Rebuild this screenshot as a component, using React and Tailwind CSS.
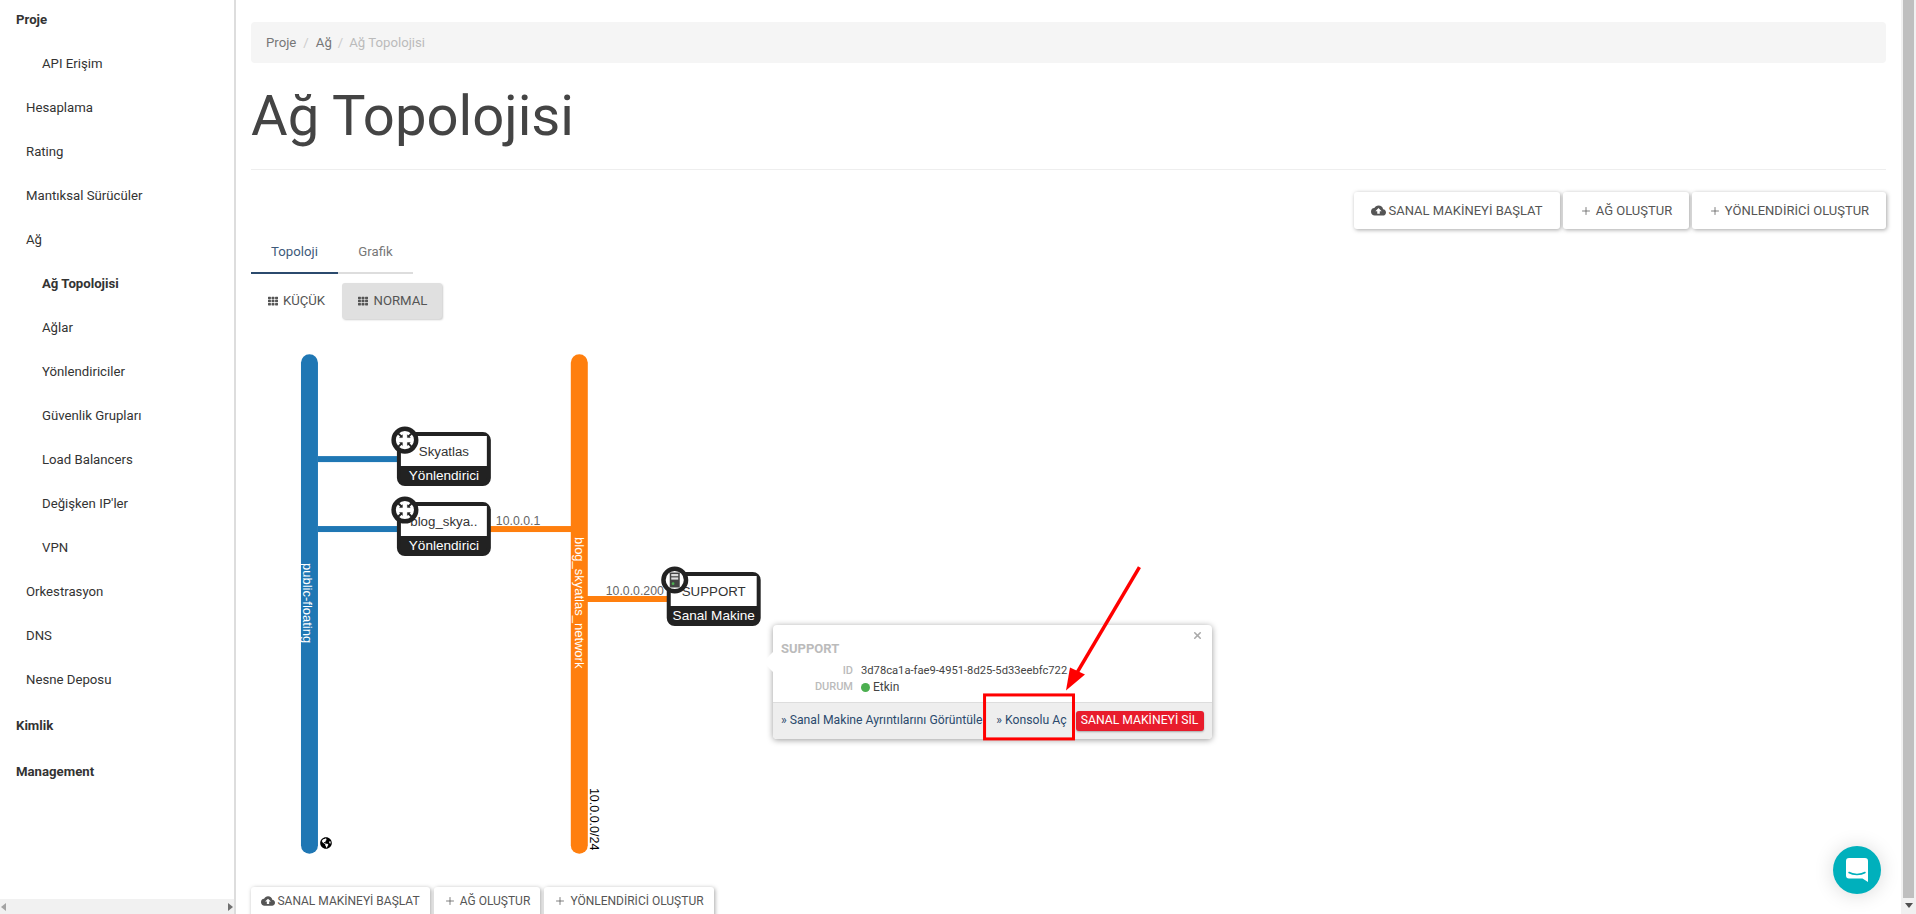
import { FaTh, FaGlobeAmericas } from "react-icons/fa";
import { MdCloudUpload } from "react-icons/md";
import { Plus, X } from "lucide-react";

const navItems = [
  { label: "Proje", level: 0 },
  { label: "API Erişim", level: 2 },
  { label: "Hesaplama", level: 1 },
  { label: "Rating", level: 1 },
  { label: "Mantıksal Sürücüler", level: 1 },
  { label: "Ağ", level: 1 },
  { label: "Ağ Topolojisi", level: 2, active: true },
  { label: "Ağlar", level: 2 },
  { label: "Yönlendiriciler", level: 2 },
  { label: "Güvenlik Grupları", level: 2 },
  { label: "Load Balancers", level: 2 },
  { label: "Değişken IP'ler", level: 2 },
  { label: "VPN", level: 2 },
  { label: "Orkestrasyon", level: 1 },
  { label: "DNS", level: 1 },
  { label: "Nesne Deposu", level: 1 },
  { label: "Kimlik", level: 0, gap: true },
  { label: "Management", level: 0, gap: true },
];

function NavItem({ item }) {
  let cls = "h-[44px] shrink-0 flex items-center text-[13.2px] text-[#333] whitespace-nowrap ";
  if (item.level === 0) cls += "pl-[16px] font-bold ";
  if (item.level === 1) cls += "pl-[26px] ";
  if (item.level === 2) cls += "pl-[42px] ";
  if (item.active) cls += "font-bold ";
  if (item.gap) cls += "mt-[2px] ";
  return <div className={cls}>{item.label}</div>;
}

function Sidebar() {
  return (
    <aside className="w-[236px] shrink-0 h-full flex flex-col border-r-2 border-[#ddd]">
      <nav className="flex-1 flex flex-col overflow-hidden -mt-[2px]">
        {navItems.map((item) => (
          <NavItem key={item.label} item={item} />
        ))}
      </nav>
      <div className="h-[15px] shrink-0 bg-[#f1f1f1] flex items-center justify-between px-[1px]">
        <svg width="6" height="8" viewBox="0 0 6 8"><path d="M5 0v8L0 4z" fill="#a3a3a3" /></svg>
        <svg width="6" height="8" viewBox="0 0 6 8"><path d="M1 0v8l5-4z" fill="#707070" /></svg>
      </div>
    </aside>
  );
}

function ActionButton({ icon, label, className }) {
  return (
    <button className={"rounded-[3px] bg-white flex items-center justify-center text-[#555] whitespace-nowrap shadow-[1px_1px_4px_rgba(0,0,0,0.35)] " + className}>
      {icon}
      {label}
    </button>
  );
}

function TopActions() {
  const plus = <Plus size={12} strokeWidth={1.5} className="text-[#555]" />;
  return (
    <div className="flex gap-[3px] mt-[22px] justify-end shrink-0">
      <ActionButton icon={<MdCloudUpload size={15} />} label="SANAL MAKİNEYİ BAŞLAT" className="w-[206px] h-[37px] gap-[2px] text-[13px]" />
      <ActionButton icon={plus} label="AĞ OLUŞTUR" className="w-[126px] h-[37px] gap-[4px] text-[13px]" />
      <ActionButton icon={plus} label="YÖNLENDİRİCİ OLUŞTUR" className="w-[194px] h-[37px] gap-[4px] text-[13px]" />
    </div>
  );
}

function BottomActions() {
  const plus = <Plus size={12} strokeWidth={1.5} className="text-[#555]" />;
  return (
    <div className="flex gap-[4px] justify-start shrink-0">
      <ActionButton icon={<MdCloudUpload size={14} />} label="SANAL MAKİNEYİ BAŞLAT" className="w-[179px] h-[37px] pb-[10px] gap-[2px] text-[12px]" />
      <ActionButton icon={plus} label="AĞ OLUŞTUR" className="w-[106px] h-[37px] pb-[10px] gap-[4px] text-[12px]" />
      <ActionButton icon={plus} label="YÖNLENDİRİCİ OLUŞTUR" className="w-[170px] h-[37px] pb-[10px] gap-[4px] text-[12px]" />
    </div>
  );
}

function RouterIcon({ cx, cy }) {
  return (
    <g transform={`translate(${cx} ${cy})`}>
      <circle r="11.3" fill="#fff" stroke="#222" strokeWidth="4.5" />
      {[0, 90, 180, 270].map((r) => (
        <g key={r} transform={`rotate(${r})`} fill="#222" stroke="#222">
          <path d="M-7 -7L-3.5 -3.5" strokeWidth="2" />
          <path d="M-2.5 -2.5L-2.5 -5.4L-5.4 -2.5Z" strokeWidth="0.4" />
        </g>
      ))}
    </g>
  );
}

function ServerIcon({ cx, cy }) {
  return (
    <g transform={`translate(${cx} ${cy})`}>
      <circle r="11.3" fill="#fff" stroke="#222" strokeWidth="4.5" />
      <rect x="-5" y="-7.5" width="10" height="15" rx="0.8" fill="#444" />
      <rect x="-3.5" y="-6" width="7" height="2.2" fill="#ddd" />
      <rect x="-3.5" y="-2.6" width="7" height="2.2" fill="#ddd" />
      <circle cx="-1.7" cy="3.7" r="1.4" fill="#4caf50" />
    </g>
  );
}

function Node({ x, y, name, type, icon }) {
  return (
    <g>
      <rect x={x + 2} y={y + 2} width="90" height="50" rx="6" fill="#222" stroke="#222" strokeWidth="4" />
      <path d={`M${x + 4} ${y + 4}H${x + 90}V${y + 34}H${x + 4}Z`} fill="#fff" />
      <text x={x + 47} y={y + 24} textAnchor="middle" fontSize="13.3" fill="#333">{name}</text>
      <text x={x + 47} y={y + 48} textAnchor="middle" fontSize="13.6" fill="#fff">{type}</text>
      {icon}
    </g>
  );
}

function Topology() {
  return (
    <svg viewBox="251 319 1636 568" className="absolute inset-0 w-full h-full" style={{ fontFamily: "'Liberation Sans', Arial, sans-serif" }}>
      <rect x="318" y="456" width="80" height="6" fill="#1f77b4" />
      <rect x="318" y="526" width="80" height="6" fill="#1f77b4" />
      <rect x="490" y="526" width="82" height="6" fill="#ff7f0e" />
      <rect x="587" y="596" width="81" height="6" fill="#ff7f0e" />
      <rect x="301" y="354" width="17" height="500" rx="8.5" fill="#1f77b4" />
      <rect x="571" y="354" width="17" height="500" rx="8.5" fill="#ff7f0e" />
      <text transform="translate(303 563) rotate(90)" fontSize="13" fill="#fff">public-floating</text>
      <text transform="translate(575 537) rotate(90)" fontSize="13" fill="#fff">blog_skyatlas_network</text>
      <text transform="translate(590 788) rotate(90)" fontSize="12.5" fill="#000">10.0.0.0/24</text>
      <text x="496" y="525" fontSize="12.3" fill="#666">10.0.0.1</text>
      <text x="606" y="595" fontSize="12.3" fill="#666">10.0.0.200</text>
      <Node x={397} y={432} name="Skyatlas" type="Yönlendirici" icon={<RouterIcon cx={405} cy={440} />} />
      <Node x={397} y={502} name="blog_skya.." type="Yönlendirici" icon={<RouterIcon cx={405} cy={510} />} />
      <Node x={667} y={572} name="SUPPORT" type="Sanal Makine" icon={<ServerIcon cx={675} cy={580} />} />
    </svg>
  );
}

function Popover() {
  return (
    <div className="absolute left-[522px] top-[306px] w-[439px] h-[114px] bg-white rounded-[4px] flex flex-col shadow-[0_1px_6px_rgba(0,0,0,0.4)]">
      <div className="absolute -left-[7px] top-[30px] w-[14px] h-[14px] rotate-45 bg-white" />
      <X size={11} strokeWidth={3.5} className="absolute right-[9px] top-[5px] text-[#aaa]" />
      <div className="relative flex-1 pl-[8px] pt-[16px] text-[12px]">
        <div className="font-bold text-[13px] text-[#bbb] leading-[16px] h-[22px]">SUPPORT</div>
        <div className="flex h-[16px] items-center pt-[1px]">
          <span className="w-[72px] text-right text-[11px] text-[#bbb] font-medium">ID</span>
          <span className="ml-[8px] text-[11.2px] text-[#444]">3d78ca1a-fae9-4951-8d25-5d33eebfc722</span>
        </div>
        <div className="flex h-[16px] items-center">
          <span className="w-[72px] text-right text-[11px] text-[#bbb] font-medium">DURUM</span>
          <span className="ml-[8px] w-[9px] h-[9px] rounded-full bg-[#4caf50]" />
          <span className="ml-[3px] text-[#444]">Etkin</span>
        </div>
      </div>
      <div className="relative h-[37px] shrink-0 bg-[#eee] border-t border-[#ddd] rounded-b-[4px] flex items-center pb-[1px] text-[12.2px] text-[#2b4a6d] whitespace-nowrap">
        <span className="ml-[8px]">» Sanal Makine Ayrıntılarını Görüntüle</span>
        <span className="ml-[14px]">» Konsolu Aç</span>
        <span className="ml-[9px] h-[20px] w-[128px] rounded-[3px] bg-[#e81c2c] text-white flex items-center justify-center shadow-[0_1px_2px_rgba(0,0,0,0.3)]">SANAL MAKİNEYİ SİL</span>
      </div>
    </div>
  );
}

function Annotation() {
  return (
    <svg viewBox="251 319 1636 568" className="absolute inset-0 w-full h-full pointer-events-none">
      <rect x="985" y="695" width="89" height="44" fill="none" stroke="#f00" strokeWidth="3" />
      <path d="M1140 567L1078 672" stroke="#f00" strokeWidth="3.5" />
      <path d="M1066.5 690.5L1070.5 667.5L1085.5 674.5Z" fill="#f00" />
    </svg>
  );
}

function ChatButton() {
  return (
    <div className="absolute left-[1833px] top-[846px] w-[48px] h-[48px] rounded-full bg-[#00b0bc] flex items-center justify-center shadow-[0_1px_20px_rgba(0,0,0,0.15)]">
      <svg width="22" height="24" viewBox="0 0 22 24">
        <path d="M3 0H19A3 3 0 0 1 22 3V24L16.5 20.5H3A3 3 0 0 1 0 17.5V3A3 3 0 0 1 3 0Z" fill="#fff" />
        <path d="M3 14.5C7 17 15 17 19 14.5" fill="none" stroke="#00b0bc" strokeWidth="1.5" strokeLinecap="round" />
      </svg>
    </div>
  );
}

export default function App() {
  return (
    <div className="relative h-[914px] flex overflow-hidden bg-white" style={{ fontFamily: "Roboto, sans-serif" }}>
      <Sidebar />
      <main className="flex-1 min-w-0 flex flex-col pl-[15px] pr-[15px]">
        <div className="mt-[22px] h-[41px] shrink-0 bg-[#f5f5f5] rounded-[4px] flex items-center pl-[15px] text-[13.2px] text-[#777]">
          <span>Proje</span>
          <span className="mx-[7px] text-[#ccc]">/</span>
          <span>Ağ</span>
          <span className="mx-[6px] text-[#ccc]">/</span>
          <span className="text-[#bbb]">Ağ Topolojisi</span>
        </div>
        <div className="h-[107px] shrink-0 border-b border-[#eee] flex items-center">
          <h1 className="text-[56.2px] font-normal text-[#444] leading-none">Ağ Topolojisi</h1>
        </div>
        <TopActions />
        <div className="mt-[2px] w-[162px] h-[43px] shrink-0 flex border-b-2 border-[#ddd]">
          <div className="w-[87px] h-[43px] flex items-center justify-center border-b-2 border-[#2b4a6d] text-[13.2px] text-[#3d5a7b]">Topoloji</div>
          <div className="w-[75px] h-[41px] flex items-center justify-center text-[13.2px] text-[#777]">Grafik</div>
        </div>
        <div className="mt-[9px] h-[36px] shrink-0 flex text-[13.2px] text-[#555]">
          <div className="w-[91px] flex items-center justify-center gap-[5px]"><FaTh size={10} />KÜÇÜK</div>
          <div className="w-[100px] flex items-center justify-center gap-[6px] pl-[1px] bg-[#e0e0e0] rounded-[3px] shadow-[1px_1px_2px_rgba(0,0,0,0.2)]"><FaTh size={10} />NORMAL</div>
        </div>
        <div className="relative h-[568px] shrink-0">
          <Topology />
          <div className="absolute left-[69px] top-[518px]"><FaGlobeAmericas size={12} className="text-black" /></div>
          <Popover />
          <Annotation />
        </div>
        <BottomActions />
      </main>
      <div className="w-[15px] shrink-0 h-full bg-[#f1f1f1] flex flex-col items-center">
        <div className="w-[11px] h-[898px] bg-[#bfbfbf]" />
        <svg className="mt-[5px]" width="8" height="5" viewBox="0 0 8 5"><path d="M0 0h8L4 5z" fill="#505050" /></svg>
      </div>
      <ChatButton />
    </div>
  );
}
